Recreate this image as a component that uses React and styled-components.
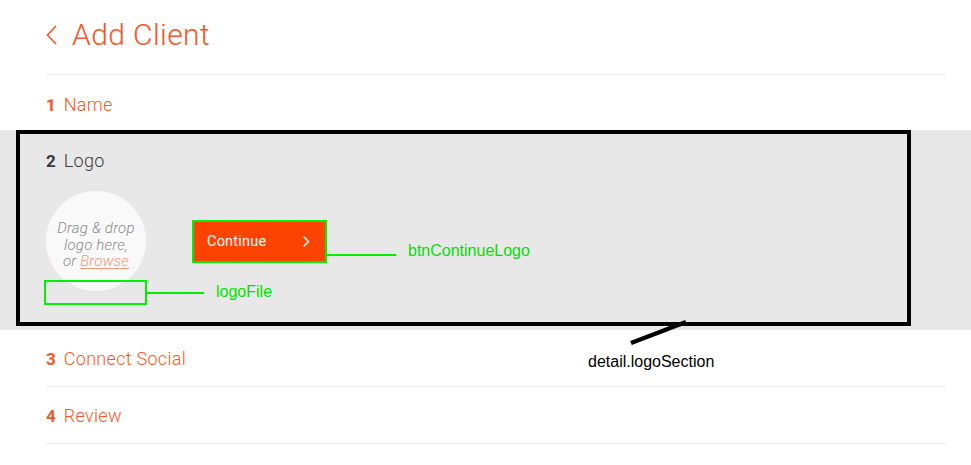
import React from "react";
import styled, { createGlobalStyle } from "styled-components";

const GlobalStyle = createGlobalStyle`
  html, body { margin: 0; padding: 0; background: #fff; }
  body { font-family: Roboto, "Noto Sans", sans-serif; -webkit-font-smoothing: antialiased; }
  * { box-sizing: border-box; }
`;

const Page = styled.div`
  position: relative;
  width: 971px;
  height: 465px;
  overflow: hidden;
  background: #fff;
`;

const Header = styled.header`
  display: flex;
  align-items: center;
  gap: 15px;
  height: 75px;
  margin: 0 25px 0 46px;
  border-bottom: 1px solid #ececec;
  padding-bottom: 5px;
  color: #f5562a;
`;

const Title = styled.h1`
  margin: 0;
  font-size: 30px;
  font-weight: 300;
  letter-spacing: 0.4px;
`;

const Step = styled.section`
  background: ${(p) => (p.$active ? "#e8e8e8" : "transparent")};
`;

const StepInner = styled.div`
  margin: 0 25px 0 46px;
  border-bottom: ${(p) => (p.$line ? "1px solid #ececec" : "none")};
  padding: ${(p) => (p.$active ? "20px 0 0" : p.$pt ? `${p.$pt}px 0 0` : "0")};
  height: ${(p) => p.$h}px;
  display: flex;
  flex-direction: column;
  justify-content: ${(p) => (p.$active ? "flex-start" : "center")};
`;

const StepTitle = styled.div`
  display: flex;
  align-items: baseline;
  gap: 8px;
  font-size: 18px;
  font-weight: 300;
  letter-spacing: 0.3px;
  color: ${(p) => (p.$active ? "#3a3a3a" : "#f5562a")};
  b { font-weight: 700; font-size: 17px; letter-spacing: 0; }
`;

const StepBody = styled.div`
  display: flex;
  align-items: center;
  gap: 46px;
  margin-top: 20px;
`;

const Drop = styled.div`
  width: 100px;
  height: 100px;
  border-radius: 50%;
  background: #f9f9f9;
  display: flex;
  align-items: center;
  justify-content: center;
  text-align: center;
  font-style: italic;
  font-weight: 300;
  font-size: 15px;
  line-height: 16.5px;
  letter-spacing: 0.2px;
  color: #8a8a8a;
  padding-top: 8px;
  white-space: nowrap;
`;

const Browse = styled.span`
  color: #f59579;
  text-decoration: underline;
  text-underline-offset: 2px;
`;

const ContinueBtn = styled.button`
  width: 133px;
  height: 41px;
  border: none;
  background: #fc4400;
  color: #fff;
  font-family: Roboto, sans-serif;
  font-size: 14.5px;
  font-weight: 400;
  letter-spacing: 0.2px;
  display: flex;
  align-items: center;
  justify-content: space-between;
  padding: 0 15px 0 15px;
  margin-top: 1px;
`;

const Overlay = styled.div`
  position: absolute;
  left: ${(p) => p.$x}px;
  top: ${(p) => p.$y}px;
  width: ${(p) => p.$w}px;
  height: ${(p) => p.$h}px;
  border: ${(p) => p.$b}px solid ${(p) => p.$c};
  pointer-events: none;
`;

const HLine = styled.div`
  position: absolute;
  left: ${(p) => p.$x}px;
  top: ${(p) => p.$y}px;
  width: ${(p) => p.$w}px;
  height: 2px;
  background: #00f000;
`;

const Label = styled.div`
  position: absolute;
  left: ${(p) => p.$x}px;
  top: ${(p) => p.$y}px;
  font-family: "Liberation Sans", Arial, sans-serif;
  font-size: 16px;
  color: ${(p) => p.$c};
  white-space: nowrap;
`;

const Pointer = styled.svg`
  position: absolute;
  left: 620px;
  top: 310px;
`;

export default function App() {
  return (
    <>
      <GlobalStyle />
      <Page>
        <Header>
          <svg width="11" height="20" viewBox="0 0 11 20">
            <path d="M10 1 L1.5 10 L10 19" fill="none" stroke="#f5562a" strokeWidth="1.6" />
          </svg>
          <Title>Add Client</Title>
        </Header>

        <Step>
          <StepInner $h={55} $pt={3}>
            <StepTitle><b>1</b>Name</StepTitle>
          </StepInner>
        </Step>

        <Step $active>
          <StepInner $active $h={200}>
            <StepTitle $active><b>2</b>Logo</StepTitle>
            <StepBody>
              <Drop>
                <div>
                  Drag &amp; drop<br />logo here,<br />or <Browse>Browse</Browse>
                </div>
              </Drop>
              <ContinueBtn>
                <span>Continue</span>
                <svg width="8" height="13" viewBox="0 0 8 13">
                  <path d="M1.5 1.5 L6.5 6.5 L1.5 11.5" fill="none" stroke="#fff" strokeWidth="1.5" />
                </svg>
              </ContinueBtn>
            </StepBody>
          </StepInner>
        </Step>

        <Step>
          <StepInner $line $h={57} $pt={1}>
            <StepTitle><b>3</b>Connect Social</StepTitle>
          </StepInner>
        </Step>
        <Step>
          <StepInner $line $h={57}>
            <StepTitle><b>4</b>Review</StepTitle>
          </StepInner>
        </Step>

        <Overlay $x={16} $y={130} $w={895} $h={196} $b={4} $c="#000" />
        <Pointer width="80" height="40" viewBox="0 0 80 40">
          <path d="M11 33 L66 12" stroke="#000" strokeWidth="4.5" />
        </Pointer>
        <Label $x={588} $y={353} $c="#000">detail.logoSection</Label>

        <Overlay $x={192} $y={220} $w={135} $h={43} $b={2} $c="#00f000" />
        <HLine $x={327} $y={254} $w={69} />
        <Label $x={408} $y={242} $c="#00e000">btnContinueLogo</Label>

        <Overlay $x={44} $y={280} $w={103} $h={25} $b={2} $c="#00f000" />
        <HLine $x={147} $y={292} $w={57} />
        <Label $x={216} $y={283} $c="#00e000">logoFile</Label>
      </Page>
    </>
  );
}
